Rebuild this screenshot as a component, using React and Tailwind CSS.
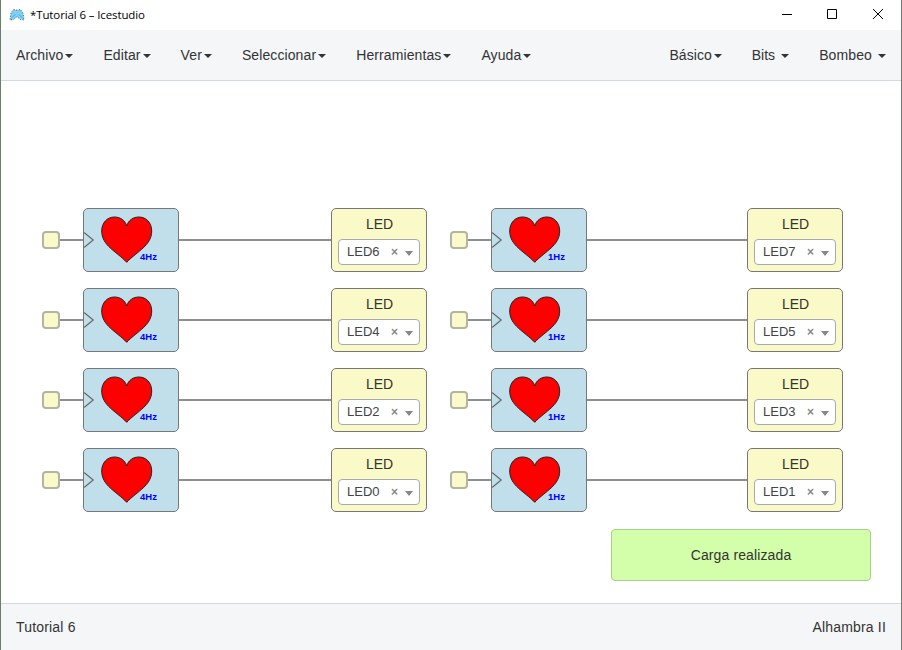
const leftMenu = ["Archivo", "Editar", "Ver", "Seleccionar", "Herramientas", "Ayuda"];
const rightMenu = [
  { label: "Básico", spacing: "gap-[2px] tracking-[0.05px]" },
  { label: "Bits", spacing: "gap-[6px]" },
  { label: "Bombeo", spacing: "gap-[6px] tracking-[0.12px]" },
];
const rows = [
  ["LED6", "LED7"],
  ["LED4", "LED5"],
  ["LED2", "LED3"],
  ["LED0", "LED1"],
];

function Caret() {
  return (
    <span className="mt-px h-0 w-0 border-x-4 border-t-4 border-x-transparent border-t-[#333333]" />
  );
}

function MenuItem({ label, spacing = "gap-[2px] tracking-[0.1px]" }) {
  return (
    <button className={`flex items-center px-[15px] ${spacing}`}>
      <span>{label}</span>
      <Caret />
    </button>
  );
}

function AppIcon() {
  return (
    <svg width="16" height="14" viewBox="0 0 16 14" className="block">
      <path
        d="M4.500 1.500 8 2.200l3.500-.7L14 5l1 7-3.500-.5L8 8.700l-3.500 2.800L1 12l1-7z"
        fill="#7fd0f2"
      />
      <path
        d="M4.500 1.500 8 2.200l3.500-.7L14 5l1 7-3.500-.5L8 8.700l-3.500 2.800L1 12l1-7z"
        fill="none"
        stroke="#2c5f78"
        strokeWidth="0.900"
        strokeDasharray="1.200 1.500"
      />
      <path d="m2.500 9.500 4-3M13.500 9.500l-4-3" fill="none" stroke="#4fb0dc" />
    </svg>
  );
}

function TitleBar() {
  return (
    <header className="flex h-[30px] items-center bg-white pl-2 font-['Open_Sans',sans-serif] text-black">
      <AppIcon />
      <span className="ml-[5px] text-[11.5px] tracking-[-0.12px]">*Tutorial 6 – Icestudio</span>
      <svg
        width="102"
        height="12"
        viewBox="0 0 102 12"
        className="mr-[17px] mb-[2px] ml-auto block"
        fill="none"
        stroke="#000"
      >
        <path d="M0 6.500h10" />
        <path d="M45.500 1.500h9v9h-9z" />
        <path d="m91 1 10 10M101 1 91 11" />
      </svg>
    </header>
  );
}

function Wire({ width }) {
  return <div className={`h-[2px] bg-[#8f8f8f] ${width}`} />;
}

function HeartBlock({ rate }) {
  return (
    <div className="h-16 w-24 rounded-[5px] border border-[#777777] bg-[#c0dfeb]">
      <svg width="94" height="62" viewBox="1 1 94 62" className="block">
        <path d="M1 24.500 10.200 32 1 39.500" fill="none" stroke="#666" strokeWidth="1.200" />
        <path
          d="M43.700 18C42 12 37 9 31.500 9C24 9 18.700 15 18.700 23C18.700 37.500 33 43 43.700 54.300C54.400 43 68.700 37.500 68.700 23C68.700 15 63.400 9 55.900 9C50.400 9 45.400 12 43.700 18Z"
          fill="#ff0000"
          stroke="#222"
          strokeWidth="1"
        />
        <text
          x="57"
          y="52"
          fill="#0000ff"
          fontSize="9.500"
          fontWeight="700"
          fontFamily="Liberation Sans, Arial, sans-serif"
        >
          {rate}
        </text>
      </svg>
    </div>
  );
}

function LedBlock({ value }) {
  return (
    <div className="flex h-16 w-24 flex-col items-center rounded-[5px] border border-[#777777] bg-[#fafac8]">
      <div className="mt-[5px] h-5 pl-px text-sm leading-5">LED</div>
      <div className="mt-[5px] flex h-[26px] w-[82px] items-center rounded-[4px] border border-[#aaaaaa] bg-white pl-2 text-[13px] text-[#444444]">
        <span className="w-[44px]">{value}</span>
        <span className="mt-[2px] w-[14px] text-[12px] font-bold text-[#888888]">×</span>
        <span className="mt-[3px] h-0 w-0 border-x-4 border-t-5 border-x-transparent border-t-[#888888]" />
      </div>
    </div>
  );
}

function Chain({ rate, led, wire }) {
  return (
    <div className="flex items-center">
      <div className="h-[18px] w-[18px] rounded-[4px] border-2 border-[#b3b3a6] bg-[#fafac8]" />
      <Wire width="w-[23px]" />
      <HeartBlock rate={rate} />
      <Wire width={wire} />
      <LedBlock value={led} />
    </div>
  );
}

export default function App() {
  return (
    <div className="relative flex h-[650px] w-[902px] flex-col overflow-hidden border-x border-[#6b806b] bg-white font-['Liberation_Sans',Arial,sans-serif] text-sm text-[#333333]">
      <TitleBar />
      <nav className="flex h-[51px] items-stretch justify-between border-b border-[#d3dadd] bg-[#f4f6f8]">
        <div className="flex">
          {leftMenu.map((label) => (
            <MenuItem key={label} label={label} />
          ))}
        </div>
        <div className="flex">
          {rightMenu.map((item) => (
            <MenuItem key={item.label} {...item} />
          ))}
        </div>
      </nav>
      <main className="flex flex-1 flex-col gap-4 pt-[127px] pl-[41px]">
        {rows.map(([left, right]) => (
          <div key={left} className="flex gap-[23px]">
            <Chain rate="4Hz" led={left} wire="w-[152px]" />
            <Chain rate="1Hz" led={right} wire="w-[160px]" />
          </div>
        ))}
      </main>
      <div className="absolute top-[529px] left-[610px] flex h-[52px] w-[260px] items-center justify-center rounded-[4px] border border-[#a9cf88] bg-[#d3ffab] tracking-[0.12px]">
        Carga realizada
      </div>
      <footer className="flex h-[47px] items-center justify-between border-t border-[#d3d8dd] bg-[#f4f6f8] px-[15px] tracking-[0.18px]">
        <span>Tutorial 6</span>
        <span>Alhambra II</span>
      </footer>
    </div>
  );
}
